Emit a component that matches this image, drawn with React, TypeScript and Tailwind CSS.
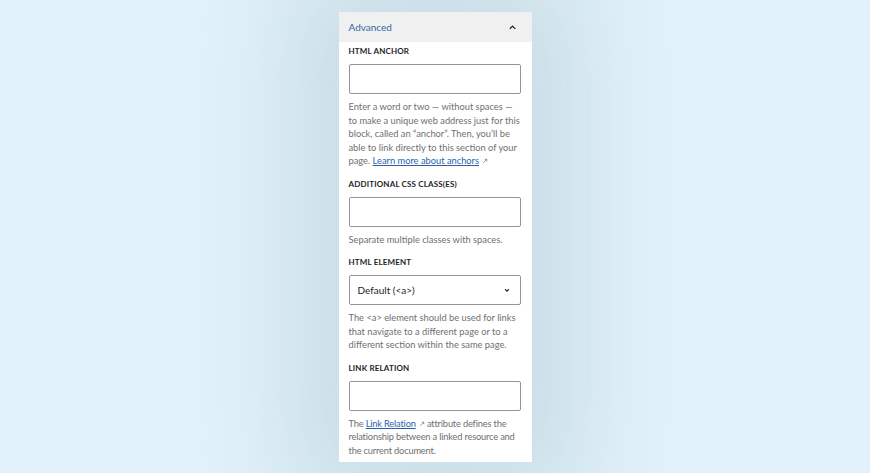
import React from "react";

const font = { fontFamily: 'Lato, "Noto Sans", Arial, sans-serif' };

function ExtArrow() {
  return (
    <svg viewBox="0 0 10 10" className="inline-block h-[6px] w-[6px] ml-[3px] align-[0px] text-[#6b6b6b]">
      <path d="M2 8 L8 2 M4.5 2 H8 V5.5" fill="none" stroke="currentColor" strokeWidth="1.1" />
    </svg>
  );
}

function Label({ children, first }: { children: React.ReactNode; first?: boolean }) {
  return (
    <p className={`${first ? "mt-[3px]" : "mt-[10px]"} text-[8px] leading-[12px] font-bold uppercase tracking-[0.02em] text-[#1e1e1e]`}>
      {children}
    </p>
  );
}

function Field() {
  return <div className="mt-[7px] h-[30px] w-full rounded-[2px] border border-[#949494] bg-white" />;
}

function Help({ children, tight }: { children: React.ReactNode; tight?: boolean }) {
  return (
    <p className={`mt-[6px] text-[9.3px] leading-[13.5px] text-[#6f6f6f] ${tight ? "tracking-[-0.02em]" : ""}`}>
      {children}
    </p>
  );
}

export default function App() {
  return (
    <div className="flex h-[473px] w-full justify-center bg-[#e2f2fa] pt-[12px]" style={font}>
      <div className="h-[450px] w-[193px] bg-white shadow-[0_0_110px_50px_rgba(170,195,205,0.45)]">
        {/* Header */}
        <div className="flex h-[30px] items-center justify-between bg-[#f0f0f0] pl-[10px] pr-[15px]">
          <span className="text-[10px] text-[#2f6aa3]">Advanced</span>
          <svg viewBox="0 0 10 10" className="h-[9px] w-[9px] text-[#1e1e1e]">
            <path d="M2 6.5 L5 3.5 L8 6.5" fill="none" stroke="currentColor" strokeWidth="1.4" />
          </svg>
        </div>

        <div className="pl-[10px] pr-[11px] pb-[5px]">
          <Label first>HTML Anchor</Label>
          <Field />
          <Help>
            Enter a word or two — without spaces — to make a unique web address just for this block, called an
            “anchor”. Then, you’ll be able to link directly to this section of your page.{" "}
            <span className="text-[#2c5fae] underline">Learn more about anchors</span>
            <ExtArrow />
          </Help>

          <Label>Additional CSS Class(es)</Label>
          <Field />
          <Help>Separate multiple classes with spaces.</Help>

          <Label>HTML Element</Label>
          <div className="mt-[7px] flex h-[30px] w-full items-center justify-between rounded-[2px] border border-[#949494] bg-white pl-[8px] pr-[9px]">
            <span className="text-[10px] text-[#1e1e1e]">Default (&lt;a&gt;)</span>
            <svg viewBox="0 0 10 10" className="h-[8px] w-[8px] text-[#1e1e1e]">
              <path d="M2.5 4 L5 6.5 L7.5 4" fill="none" stroke="currentColor" strokeWidth="1.3" />
            </svg>
          </div>
          <Help>
            The &lt;a&gt; element should be used for links that navigate to a different page or to a different
            section within the same page.
          </Help>

          <Label>Link Relation</Label>
          <Field />
          <Help tight>
            The <span className="text-[#2c5fae] underline">Link Relation</span>
            <ExtArrow /> attribute defines the relationship between a linked resource and the current document.
          </Help>
        </div>
      </div>
    </div>
  );
}
